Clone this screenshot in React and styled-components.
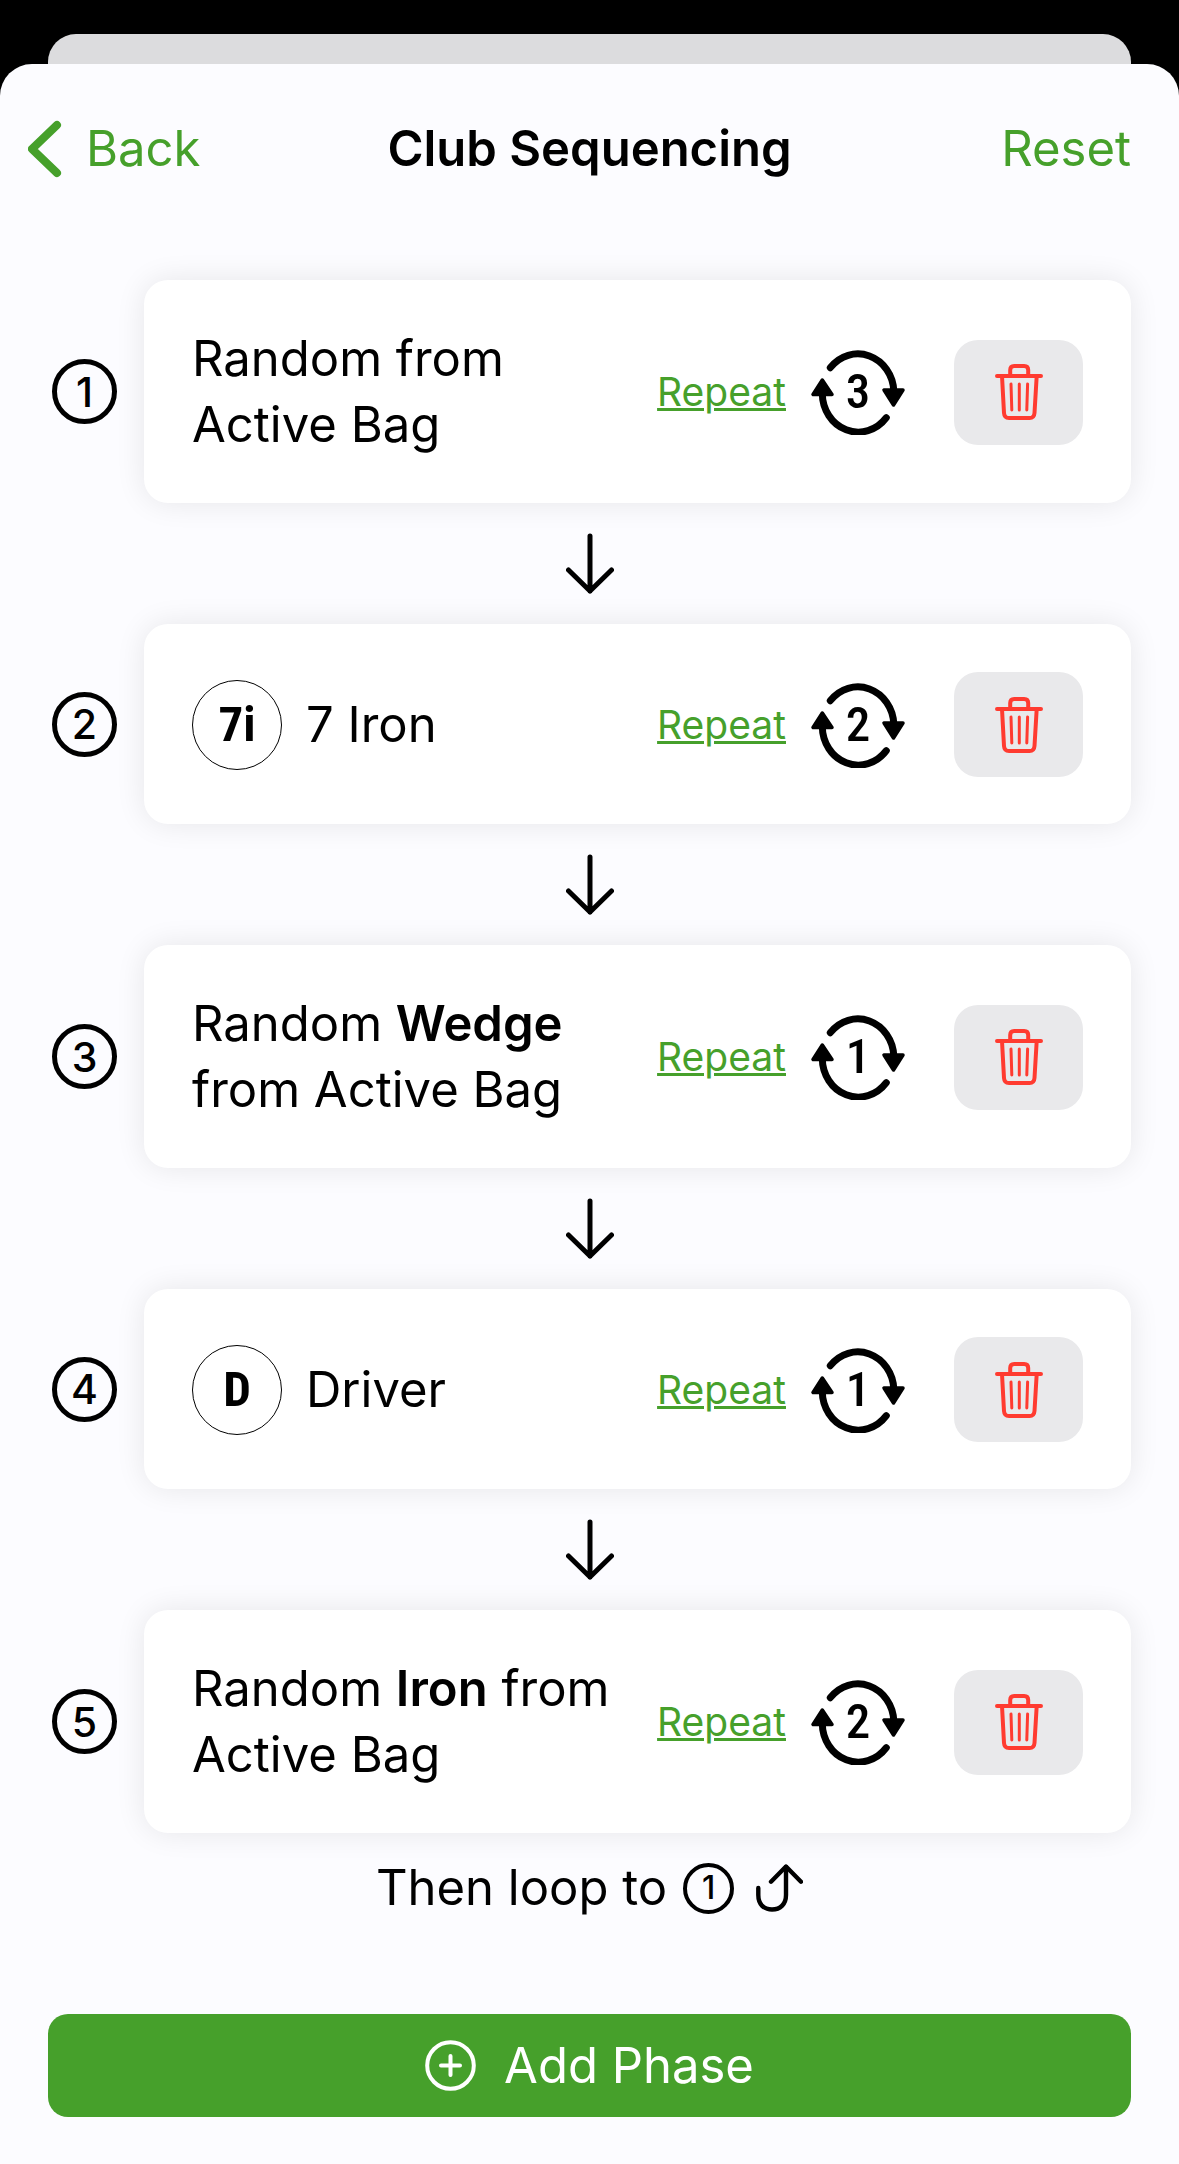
import React from 'react';
import styled, { createGlobalStyle } from 'styled-components';

const colors = {
  green: '#46a02b',
  red: '#ff3b30',
  sheet: '#fcfcff',
  behind: '#dcdcde',
  gray: '#e9e9eb',
};

const narrowFont = "'Liberation Sans Narrow', 'Roboto Condensed', Roboto, sans-serif";

const phases = [
  { label: 'Random from Active Bag', repeat: 3 },
  { badge: '7i', label: '7 Iron', repeat: 2 },
  { label: ['Random ', <b key="kind">Wedge</b>, ' from ', 'Active Bag'], repeat: 1 },
  { badge: 'D', label: 'Driver', repeat: 1 },
  { label: ['Random ', <b key="kind">Iron</b>, ' from ', 'Active Bag'], repeat: 2 },
];

function App() {
  return (
    <>
      <GlobalStyle />
      <BehindSheet />
      <Sheet>
        <Header>
          <BackButton type="button">
            <ChevronIcon />
            Back
          </BackButton>
          <Title>Club Sequencing</Title>
          <ResetButton type="button">Reset</ResetButton>
        </Header>

        <PhaseList>
          {phases.map((phase, idx) => (
            <Phase key={`phase-${idx}`}>
              {idx > 0 ? <DownArrowIcon /> : null}
              <PhaseRow>
                <StepNumber>{idx + 1}</StepNumber>
                <Card>
                  {phase.badge ? <ClubBadge>{phase.badge}</ClubBadge> : null}
                  <Label>{phase.label}</Label>
                  <RepeatButton type="button">
                    <RepeatText>Repeat</RepeatText>
                    <RepeatCount>
                      <RepeatIcon />
                      <Count>{phase.repeat}</Count>
                    </RepeatCount>
                  </RepeatButton>
                  <DeleteButton type="button" aria-label={`Delete phase ${idx + 1}`}>
                    <TrashIcon />
                  </DeleteButton>
                </Card>
              </PhaseRow>
            </Phase>
          ))}
        </PhaseList>

        <Loop>
          Then loop to
          <LoopNumber>1</LoopNumber>
          <LoopIcon />
        </Loop>

        <AddButton type="button">
          <PlusIcon />
          Add Phase
        </AddButton>
      </Sheet>
    </>
  );
}

export default App;

function ChevronIcon() {
  return (
    <Icon width="34" height="58" viewBox="0 0 34 58" strokeWidth="8" aria-hidden="true">
      <path d="M29 5 4 29l25 24" />
    </Icon>
  );
}

function DownArrowIcon() {
  return (
    <ArrowSvg width="48" height="61" viewBox="0 0 48 61" strokeWidth="5" aria-hidden="true">
      <path d="M24 3v55M2.5 37 24 58l21.5-21" />
    </ArrowSvg>
  );
}

function RepeatIcon() {
  return (
    <Icon width="96" height="86" viewBox="0 0 96 86" strokeWidth="7" aria-hidden="true">
      <path d="M20.3 18.7A36 38.8 0 0 1 83.8 42" />
      <path d="M76.3 68.7A36 38.8 0 0 1 12.3 44" />
      <path d="M12.3 31 3 45.5h19z" fill="currentColor" strokeWidth="3.5" />
      <path d="M74 41h19l-9.5 15z" fill="currentColor" strokeWidth="3.5" />
    </Icon>
  );
}

function TrashIcon() {
  return (
    <Icon width="48" height="56" viewBox="0 0 48 56" strokeWidth="4" aria-hidden="true">
      <path d="M2 12h44M15.2 12V6q0-4 4-4h10q4 0 4 4v6" />
      <path d="M7 12l2 37q.3 5 5 5h20.5q4.7 0 5-5l2.2-37" />
      <path d="M16 20l.8 26M24.3 20v26M32.6 20l-.8 26" strokeWidth="3" />
    </Icon>
  );
}

function LoopIcon() {
  return (
    <Icon width="47" height="48" viewBox="0 0 47 48" strokeWidth="4.4" aria-hidden="true">
      <path d="M15 17.7 30 2.5l15 15.2" />
      <path d="M30 3v28c0 9-5.5 14.500-14 14.500S2.300 40 2.300 31v-7" />
    </Icon>
  );
}

function PlusIcon() {
  return (
    <Icon width="51" height="51" viewBox="0 0 51 51" strokeWidth="4" aria-hidden="true">
      <circle cx="25.5" cy="25.5" r="23.3" />
      <path d="M25.5 16v19M16 25.5h19" />
    </Icon>
  );
}

const GlobalStyle = createGlobalStyle`
  * {
    box-sizing: border-box;
  }

  body {
    margin: 0;
    background: #000;
    color: #000;
    font-family: Inter, 'Liberation Sans', sans-serif;
    font-size: 49px;
    line-height: 66px;
  }

  button {
    padding: 0;
    border: 0;
    background: none;
    color: inherit;
    font: inherit;
    cursor: pointer;
  }
`;

const Icon = styled.svg`
  flex: none;
  fill: none;
  stroke: currentColor;
  stroke-linecap: round;
  stroke-linejoin: round;
`;

const ArrowSvg = styled(Icon)`
  display: block;
  margin: 30px auto;
`;

// top edge of the screen that lies under the sheet
const BehindSheet = styled.div`
  height: 30px;
  margin: 34px 48px 0;
  border-radius: 28px 28px 0 0;
  background: ${colors.behind};
`;

const Sheet = styled.main`
  display: flex;
  flex-direction: column;
  min-height: calc(100vh - 64px);
  padding-bottom: 47px;
  border-radius: 32px 32px 0 0;
  background: ${colors.sheet};
`;

const Header = styled.header`
  display: grid;
  grid-template-columns: 1fr auto 1fr;
  align-items: center;
  padding: 52px 0 98px;
`;

const BackButton = styled.button`
  display: flex;
  align-items: center;
  justify-self: start;
  gap: 24px;
  margin-left: 28px;

  color: ${colors.green};
`;

const Title = styled.h1`
  margin: 0;
  font-size: 49px;
  font-weight: 600;
`;

const ResetButton = styled.button`
  justify-self: end;
  margin-right: 48px;

  color: ${colors.green};
`;

const PhaseList = styled.ol`
  margin: 0;
  padding: 0;
  list-style: none;
`;

const Phase = styled.li``;

const PhaseRow = styled.div`
  display: flex;
  align-items: center;
  gap: 27px;
  padding: 0 48px 0 52px;
`;

const StepNumber = styled.span`
  display: flex;
  flex: none;
  align-items: center;
  justify-content: center;
  width: 65px;
  height: 65px;
  border: 5px solid #000;
  border-radius: 50%;

  font-size: 41px;
  font-weight: 500;
`;

const Card = styled.div`
  display: flex;
  flex: 1;
  align-items: center;
  min-width: 0;
  min-height: 200px;
  padding: 46px 48px 45px;
  border-radius: 24px;
  background: #fff;
  box-shadow: 0 0 30px rgba(0, 0, 0, 0.09);
`;

const ClubBadge = styled.span`
  display: flex;
  flex: none;
  align-items: center;
  justify-content: center;
  width: 90px;
  height: 90px;
  margin-right: 24px;
  border: 1px solid #000;
  border-radius: 50%;

  font-family: ${narrowFont};
  font-size: 49px;
  font-weight: 700;
`;

const Label = styled.span`
  flex: 1;
  min-width: 0;

  b {
    font-weight: 600;
  }
`;

const RepeatButton = styled.button`
  display: flex;
  flex: none;
  align-items: center;
  gap: 24px;
  margin-right: 48px;
`;

const RepeatText = styled.span`
  color: ${colors.green};
  font-size: 39px;
  text-decoration: underline;
  text-decoration-thickness: 3px;
`;

const RepeatCount = styled.span`
  display: grid;
  place-items: center;

  > * {
    grid-area: 1 / 1;
  }
`;

const Count = styled.span`
  font-family: ${narrowFont};
  font-size: 49px;
  font-weight: 500;
`;

const DeleteButton = styled.button`
  display: flex;
  flex: none;
  align-items: center;
  justify-content: center;
  width: 129px;
  height: 105px;
  border-radius: 24px;

  background: ${colors.gray};
  color: ${colors.red};
`;

const Loop = styled.p`
  display: flex;
  align-items: center;
  justify-content: center;
  margin: 22px 0 0;
`;

const LoopNumber = styled(StepNumber)`
  width: 51px;
  height: 51px;
  margin: 0 22px 0 16px;
  border-width: 4px;
  font-size: 32px;
`;

const AddButton = styled.button`
  display: flex;
  align-items: center;
  justify-content: center;
  gap: 28px;
  height: 103px;
  margin: auto 48px 0;
  border-radius: 20px;

  background: ${colors.green};
  color: #fff;
`;
